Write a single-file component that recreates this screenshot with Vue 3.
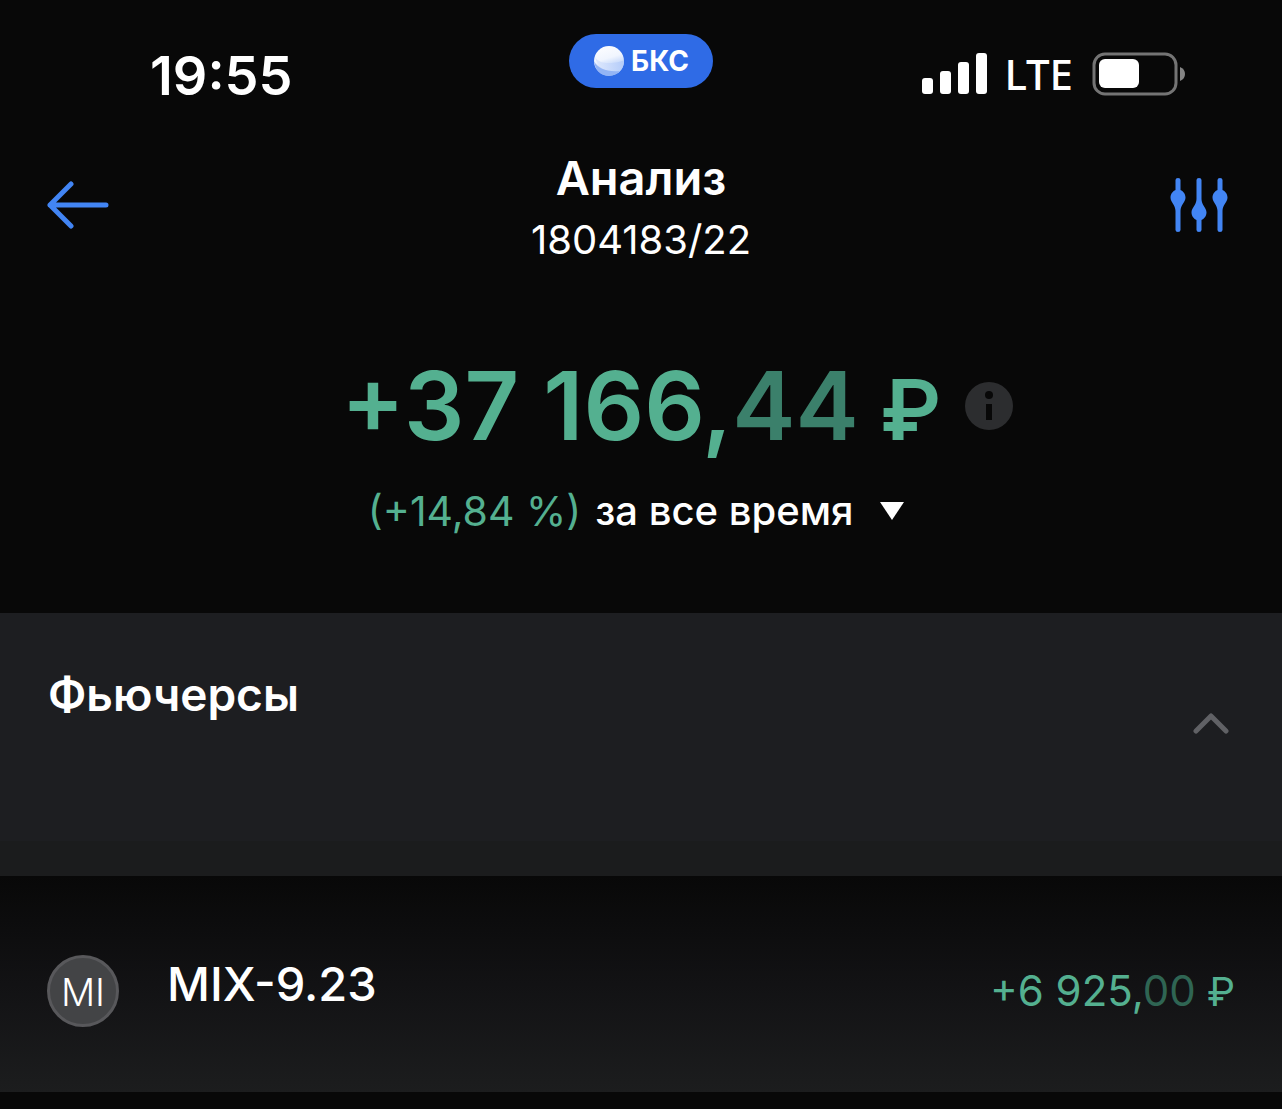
<script setup>
import { ref } from 'vue'

const expanded = ref(true)
const period = ref('all')
const futures = [
  { badge: 'MI', name: 'MIX-9.23', whole: '+6 925,', cents: '00' },
]
</script>

<template>
  <main class="screen">
    <div class="status">
      <time class="clock">19:55</time>
      <div class="pill">
        <svg width="32" height="32" viewBox="0 0 32 32" aria-hidden="true">
          <defs>
            <linearGradient id="ball" x1="0" y1="0" x2="0.3" y2="1">
              <stop offset="0" stop-color="#ffffff" />
              <stop offset="0.5" stop-color="#f0f5fe" />
              <stop offset="1" stop-color="#9cbcf6" />
            </linearGradient>
            <linearGradient id="wave" x1="0" y1="0" x2="1" y2="0">
              <stop offset="0" stop-color="#dfe9fd" />
              <stop offset="1" stop-color="#b4ccf9" />
            </linearGradient>
          </defs>
          <circle cx="16" cy="16" r="15" fill="url(#ball)" />
          <path d="M2 12C5 17 10 18 16 18C22 18 28 17 31 15C31 21 29 25 25 28C13 28 4 22 2 12Z" fill="url(#wave)" />
          <path d="M1 16C5 24 14 27 27 26C20 34 3 33 1 16Z" fill="#93b4f5" />
        </svg>
        <span>БКС</span>
      </div>
      <div class="signal">
        <svg width="66" height="42" viewBox="0 0 66 42" fill="#fff" role="img" aria-label="Сигнал">
          <rect x="0" y="25" width="11" height="16" rx="3" />
          <rect x="18" y="18" width="11" height="23" rx="3" />
          <rect x="36" y="9" width="11" height="32" rx="3" />
          <rect x="54" y="0" width="11" height="41" rx="3" />
        </svg>
        <span class="network">LTE</span>
        <svg width="94" height="44" viewBox="0 0 94 44" role="img" aria-label="Батарея">
          <rect x="2" y="2" width="82" height="40" rx="11" fill="none" stroke="#747474" stroke-width="3" />
          <rect x="7" y="7" width="40" height="29" rx="6" fill="#fff" />
          <path d="M88 15Q93 17 93 22Q93 27 88 29Z" fill="#858585" />
        </svg>
      </div>
    </div>

    <header class="header">
      <button class="icon" type="button" aria-label="Назад">
        <svg width="62" height="48" viewBox="0 0 62 48" fill="none" stroke="#4285f4" stroke-width="5" stroke-linecap="round" stroke-linejoin="round">
          <path d="M24 3L3 24L24 45M3 24H59" />
        </svg>
      </button>
      <div class="heading">
        <h1>Анализ</h1>
        <p>1804183/22</p>
      </div>
      <button class="icon filter" type="button" aria-label="Фильтры">
        <svg width="58" height="54" viewBox="0 0 58 54" fill="#4285f4">
          <path id="slider" d="M5.500 2Q5.500 0 8 0Q10.500 0 10.500 2V12C13 13 15.500 16 15.500 19.500C15.500 24 10.500 27 10.500 33V52Q10.500 54 8 54Q5.500 54 5.500 52V33C5.500 27 .5 24 .5 19.500C.5 16 3 13 5.500 12Z" />
          <use href="#slider" transform="translate(21 54) scale(1 -1)" />
          <use href="#slider" x="42" />
        </svg>
      </button>
    </header>

    <section class="summary">
      <div class="total">
        <strong>+37 166,<span class="cents">44</span><span class="currency"> ₽</span></strong>
        <button class="info" type="button" aria-label="Информация">
          <svg width="48" height="48" viewBox="0 0 48 48">
            <circle cx="24" cy="24" r="24" fill="#2c2d2f" />
            <circle cx="24" cy="13" r="4" fill="#080808" />
            <rect x="21" y="22" width="6" height="16" fill="#080808" />
          </svg>
        </button>
      </div>
      <div class="range">
        <span class="gain">(+14,84 %)</span>
        <select v-model="period" aria-label="Период">
          <option value="all">за все время</option>
        </select>
        <svg width="24" height="18" viewBox="0 0 24 18" aria-hidden="true"><path d="M0 0H24L12 18Z" fill="#fff" /></svg>
      </div>
    </section>

    <section>
      <div class="group">
        <h2>Фьючерсы</h2>
        <button class="icon" type="button" aria-label="Свернуть" :aria-expanded="expanded" @click="expanded = !expanded">
          <svg width="36" height="22" viewBox="0 0 36 22" fill="none" stroke="#606165" stroke-width="5" stroke-linecap="round" stroke-linejoin="round">
            <path d="M3 19L18 4L33 19" />
          </svg>
        </button>
      </div>
      <div class="strip"></div>
      <ul v-if="expanded">
        <li v-for="item in futures" :key="item.name">
          <span class="avatar">{{ item.badge }}</span>
          <span class="name">{{ item.name }}</span>
          <span class="amount">{{ item.whole }}<span class="cents">{{ item.cents }}</span><span class="currency"> ₽</span></span>
        </li>
      </ul>
    </section>
  </main>
</template>

<style>
body {
  margin: 0;
  background: #080808;
}
</style>

<style scoped>
.screen {
  min-height: 100vh;
  background: #080808;
  color: #fff;
  font-family: Inter, "Noto Sans", sans-serif;
}

h1, h2, p, ul {
  margin: 0;
  padding: 0;
}

svg {
  display: block;
}

button {
  padding: 0;
  border: 0;
  background: none;
  cursor: pointer;
}

.status {
  display: grid;
  grid-template-columns: 1fr auto 1fr;
  align-items: start;
  box-sizing: border-box;
  height: 120px;
  padding: 34px 96px 0;
}

.clock {
  margin: 12px 0 0 54px;
  font-size: 54px;
  font-weight: 600;
  line-height: 60px;
}

.pill {
  display: flex;
  align-items: center;
  justify-content: center;
  gap: 6px;
  width: 144px;
  height: 54px;
  border-radius: 27px;
  background: #2f6be6;
  font-size: 28px;
  font-weight: 700;
}

.signal {
  display: flex;
  align-items: center;
  justify-self: end;
  gap: 16px;
  margin-top: 16px;
}

.network {
  margin-right: 3px;
  font-family: "Noto Sans", sans-serif;
  font-size: 42px;
  font-weight: 500;
  line-height: 48px;
}

.header {
  display: grid;
  grid-template-columns: 1fr auto 1fr;
  align-items: center;
  padding: 30px 47px 0;
}

.icon {
  justify-self: start;
}

.filter {
  justify-self: end;
  margin-right: 7px;
}

.heading {
  text-align: center;
}

h1 {
  font-size: 47px;
  font-weight: 600;
  line-height: 56px;
}

.heading p {
  margin-top: 14px;
  font-size: 40px;
  line-height: 40px;
}

.summary {
  padding: 98px 48px 78px;
}

.total {
  display: grid;
  grid-template-columns: 1fr auto 1fr;
  align-items: center;
}

.total strong {
  grid-column: 2;
  color: #54b090;
  font-size: 95px;
  font-weight: 600;
  line-height: 96px;
}

.total .cents {
  color: #3b806b;
}

.currency {
  line-height: 1;
}

.total .currency {
  font-size: 84px;
}

.info {
  justify-self: start;
  margin-left: 24px;
}

.range {
  display: flex;
  align-items: center;
  justify-content: center;
  margin-top: 33px;
  padding-right: 10px;
  font-size: 41px;
  line-height: 48px;
}

.gain {
  margin-right: 14px;
  color: #54b090;
}

select {
  appearance: none;
  margin-right: 26px;
  padding: 0;
  border: 0;
  background: none;
  color: #fff;
  font: inherit;
  font-size: 40px;
  font-weight: 500;
}

.group {
  display: flex;
  align-items: center;
  justify-content: space-between;
  padding: 53px 53px 119px 48px;
  background: #1d1e21;
}

h2 {
  font-size: 46px;
  font-weight: 600;
  line-height: 56px;
}

.group .icon {
  align-self: flex-end;
  margin-bottom: -12px;
}

.strip {
  height: 35px;
  background: #1b1c1d;
}

ul {
  list-style: none;
}

li {
  display: flex;
  align-items: flex-start;
  box-sizing: border-box;
  height: 216px;
  padding: 79px 47px 0;
  background: linear-gradient(#080808, #121214 50%, #1c1d1e);
}

.avatar {
  box-sizing: border-box;
  width: 72px;
  height: 72px;
  border: 3px solid #58585b;
  border-radius: 50%;
  background: #434446;
  font-size: 38px;
  font-weight: 300;
  line-height: 68px;
  text-align: center;
}

.name {
  flex: 1;
  margin-left: 48px;
  font-size: 47px;
  font-weight: 500;
  line-height: 58px;
}

.amount {
  color: #54b090;
  font-size: 42px;
  line-height: 72px;
}

.amount .cents {
  color: #2f6553;
}

.amount .currency {
  font-size: 40px;
}
</style>
